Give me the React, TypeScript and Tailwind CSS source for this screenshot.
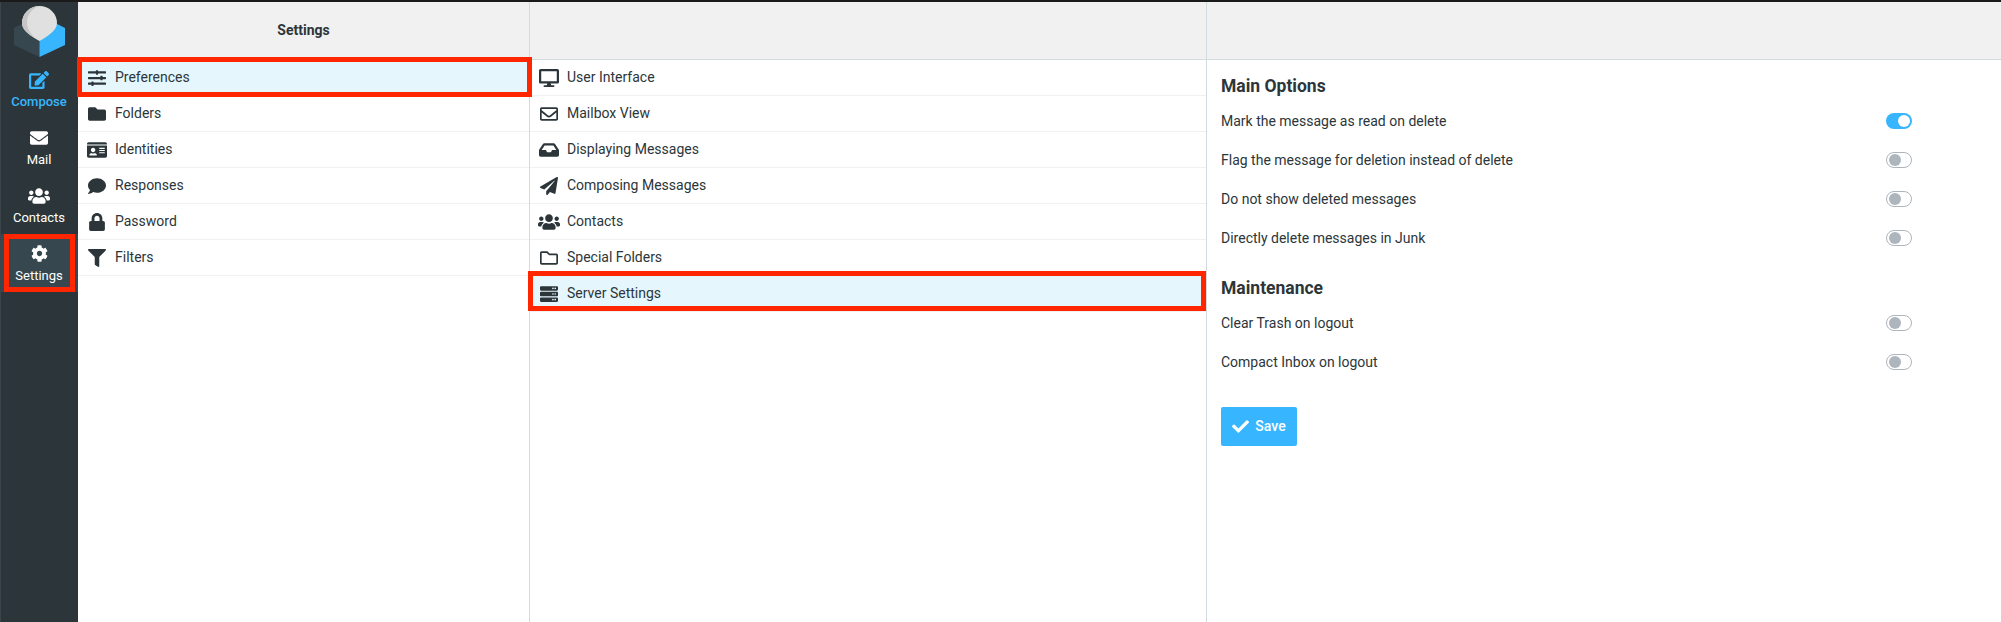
import React from "react";
import { FaSlidersH, FaFolder, FaIdCard, FaComment, FaLock, FaFilter, FaDesktop, FaRegEnvelope, FaInbox, FaPaperPlane, FaUsers, FaRegFolder, FaServer, FaEdit, FaEnvelope, FaCog, FaCheck } from "react-icons/fa";

const Logo = () => (
  <svg width="51" height="51" viewBox="0 0 51 51" className="block">
    <path d="M0 22 L25.5 9 L25.5 35 L25.5 51 L0 39 Z" fill="#37474f" />
    <path d="M51 22 L25.5 9 L25.5 35 L25.5 51 L51 39 Z" fill="#37b6ff" />
    <path d="M25.5 35 C19 31 8 25 8 17 A17.5 17 0 0 1 43 17 C43 25 32 31 25.5 35 Z" fill="#e0e0e0" />
    <path d="M25.5 0 A17.5 17 0 0 0 8 17 C8 24 15 29 21 32 C16 27 13 22 13 17 C13 9 18 2 25.5 0 Z" fill="#c6c6c6" />
  </svg>
);

const Side = ({ icon, label, className = "", active = false }: { icon: React.ReactNode; label: string; className?: string; active?: boolean }) => (
  <div className={`relative h-[58px] flex flex-col items-center justify-center gap-[4px] pr-[1px] text-[13px] leading-[15px] ${active ? "bg-[#37474f]" : ""} ${className}`}>
    <span className="h-[20px] flex items-center">{icon}</span>
    <span>{label}</span>
    {active && <span className="absolute left-[3px] right-[3px] top-0 bottom-0 border-[5px] border-[#ff2600]" />}
  </div>
);

const Row = ({ icon, label, red = "", }: { icon: React.ReactNode; label: string; red?: string }) => (
  <div className={`relative h-[36px] flex items-center border-b border-[#f1f1f1] pl-[9px] ${red ? "bg-[#e6f6fd]" : ""}`}>
    <span className="w-[20px] h-[20px] flex items-center justify-center text-[#2c363a] text-[18px] shrink-0">{icon}</span>
    <span className="ml-[8px] text-[14px] text-[#2c363a]">{label}</span>
    {red && <span className={`absolute border-[5px] border-[#ff2600] ${red}`} />}
  </div>
);

const Toggle = ({ on = false }: { on?: boolean }) =>
  on ? (
    <span className="w-[26px] h-[16px] rounded-full bg-[#37b6ff] flex items-center justify-end pr-[2px]">
      <span className="w-[12px] h-[12px] rounded-full bg-white" />
    </span>
  ) : (
    <span className="w-[26px] h-[16px] rounded-full bg-white border border-[#adb5bd] flex items-center pl-[2px]">
      <span className="w-[12px] h-[12px] rounded-full bg-[#adb5bd]" />
    </span>
  );

const Opt = ({ label, on = false }: { label: string; on?: boolean }) => (
  <div className="h-[39px] flex items-center justify-between pr-[89px] text-[14px] text-[#2c363a]">
    <span className="pt-[1px]">{label}</span>
    <Toggle on={on} />
  </div>
);

const Head = ({ children }: { children?: React.ReactNode }) => (
  <div className="h-[58px] bg-[#f1f1f1] border-b border-[#d4dbde] flex items-center justify-center text-[14px] font-bold text-[#2c363a]">{children}</div>
);

export default function App() {
  return (
    <div className="w-[2001px] h-[622px] flex flex-col bg-white overflow-hidden" style={{ fontFamily: "Roboto, sans-serif" }}>
      <div className="h-[2px] bg-[#1a1a1a] shrink-0" />
      <div className="flex flex-1 min-h-0">
        <div className="w-[78px] shrink-0 bg-[#2c363a] text-white flex flex-col border-l border-[#3a444a]">
          <div className="h-[58px] flex justify-center pt-[4px]"><Logo /></div>
          <Side className="text-[#37b6ff] font-medium" icon={<FaEdit size={20} />} label="Compose" />
          <Side icon={<FaEnvelope size={18} />} label="Mail" />
          <Side icon={<FaUsers size={22} />} label="Contacts" />
          <Side active icon={<FaCog size={17} />} label="Settings" />
        </div>
        <div className="w-[452px] shrink-0 border-r border-[#d4dbde] flex flex-col">
          <Head>Settings</Head>
          <Row red="left-[-1px] right-[-3px] top-[-3px] bottom-[-2px] z-10" icon={<FaSlidersH />} label="Preferences" />
          <Row icon={<FaFolder />} label="Folders" />
          <Row icon={<FaIdCard className="text-[20px]" />} label="Identities" />
          <Row icon={<FaComment />} label="Responses" />
          <Row icon={<FaLock />} label="Password" />
          <Row icon={<FaFilter />} label="Filters" />
        </div>
        <div className="w-[677px] shrink-0 border-r border-[#d4dbde] flex flex-col">
          <Head />
          <Row icon={<FaDesktop className="text-[20px]" />} label="User Interface" />
          <Row icon={<FaRegEnvelope />} label="Mailbox View" />
          <Row icon={<FaInbox className="text-[20px]" />} label="Displaying Messages" />
          <Row icon={<FaPaperPlane />} label="Composing Messages" />
          <Row icon={<FaUsers className="text-[22px] shrink-0" />} label="Contacts" />
          <Row icon={<FaRegFolder />} label="Special Folders" />
          <Row red="left-[-2px] right-0 top-[-5px] bottom-0" icon={<FaServer />} label="Server Settings" />
        </div>
        <div className="flex-1 min-w-0 flex flex-col">
          <Head />
          <div className="pl-[14px]">
            <h2 className="text-[17.5px] font-bold text-[#2c363a] leading-[21px] mt-[16px] mb-[4px]">Main Options</h2>
            <Opt on label="Mark the message as read on delete" />
            <Opt label="Flag the message for deletion instead of delete" />
            <Opt label="Do not show deleted messages" />
            <Opt label="Directly delete messages in Junk" />
            <h2 className="text-[17.5px] font-bold text-[#2c363a] leading-[21px] mt-[21px] mb-[4px]">Maintenance</h2>
            <Opt label="Clear Trash on logout" />
            <Opt label="Compact Inbox on logout" />
            <button className="mt-[26px] w-[76px] h-[39px] bg-[#37b6ff] rounded-[2px] text-white text-[14px] font-medium flex items-center justify-center gap-[6px]">
              <FaCheck size={17} />
              <span>Save</span>
            </button>
          </div>
        </div>
      </div>
    </div>
  );
}
